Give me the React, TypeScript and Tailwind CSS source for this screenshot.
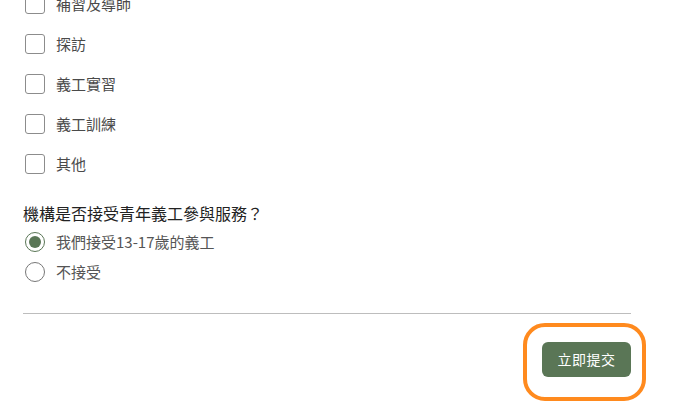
import { useState } from 'react';

const services = ['補習及導師', '探訪', '義工實習', '義工訓練', '其他'];

const youthOptions = [
  { value: 'yes', label: '我們接受13-17歲的義工' },
  { value: 'no', label: '不接受' },
];

export default function App() {
  const [checked, setChecked] = useState<string[]>([]);
  const [youth, setYouth] = useState('yes');

  function toggle(item: string) {
    setChecked((prev) =>
      prev.includes(item) ? prev.filter((i) => i !== item) : [...prev, item]
    );
  }

  return (
    <div
      className="min-h-[416px] w-[678px] overflow-hidden bg-white"
      style={{ fontFamily: '"Noto Sans CJK TC", "Noto Sans", sans-serif' }}
    >
      <div className="ml-[23px] w-[608px]">
        {/* Service types */}
        <div className="-mt-[6px] flex flex-col gap-5">
          {services.map((item) => (
            <label key={item} className="flex h-5 cursor-pointer items-center pl-[2px]">
              <input
                type="checkbox"
                className="sr-only"
                checked={checked.includes(item)}
                onChange={() => toggle(item)}
              />
              <span className="h-5 w-5 shrink-0 rounded-[3px] border border-[#8c8c8c] bg-white" />
              <span className="ml-[11px] text-[15px] leading-5 text-[#4a4a4a]">{item}</span>
            </label>
          ))}
        </div>

        {/* Youth volunteers */}
        <p className="mt-[27px] text-[16px] leading-6 text-[#222]">機構是否接受青年義工參與服務？</p>
        <div className="mt-[2px] flex flex-col">
          {youthOptions.map((opt) => (
            <label key={opt.value} className="flex h-[30px] cursor-pointer items-center pl-[2px]">
              <input
                type="radio"
                name="youth"
                className="sr-only"
                checked={youth === opt.value}
                onChange={() => setYouth(opt.value)}
              />
              <span
                className={
                  youth === opt.value
                    ? 'flex h-5 w-5 shrink-0 items-center justify-center rounded-full border border-[#5a7656]'
                    : 'flex h-5 w-5 shrink-0 items-center justify-center rounded-full border border-[#777]'
                }
              >
                {youth === opt.value && <span className="h-[12px] w-[12px] rounded-full bg-[#5a7656]" />}
              </span>
              <span className="ml-[11px] text-[15px] leading-5 text-[#555]">{opt.label}</span>
            </label>
          ))}
        </div>

        <div className="mt-[26px] h-px bg-[#bdbdbd]" />

        <div className="mt-[28px] flex justify-end">
          <div className="relative">
            <button className="h-[35px] w-[89px] rounded-[6px] bg-[#5a7656] text-[14px] tracking-[0.5px] text-white">
              立即提交
            </button>
            <div className="pointer-events-none absolute -left-[19px] -top-[19px] h-[78px] w-[123px] rounded-[22px] border-4 border-[#ff8a1e]" />
          </div>
        </div>
      </div>
    </div>
  );
}
